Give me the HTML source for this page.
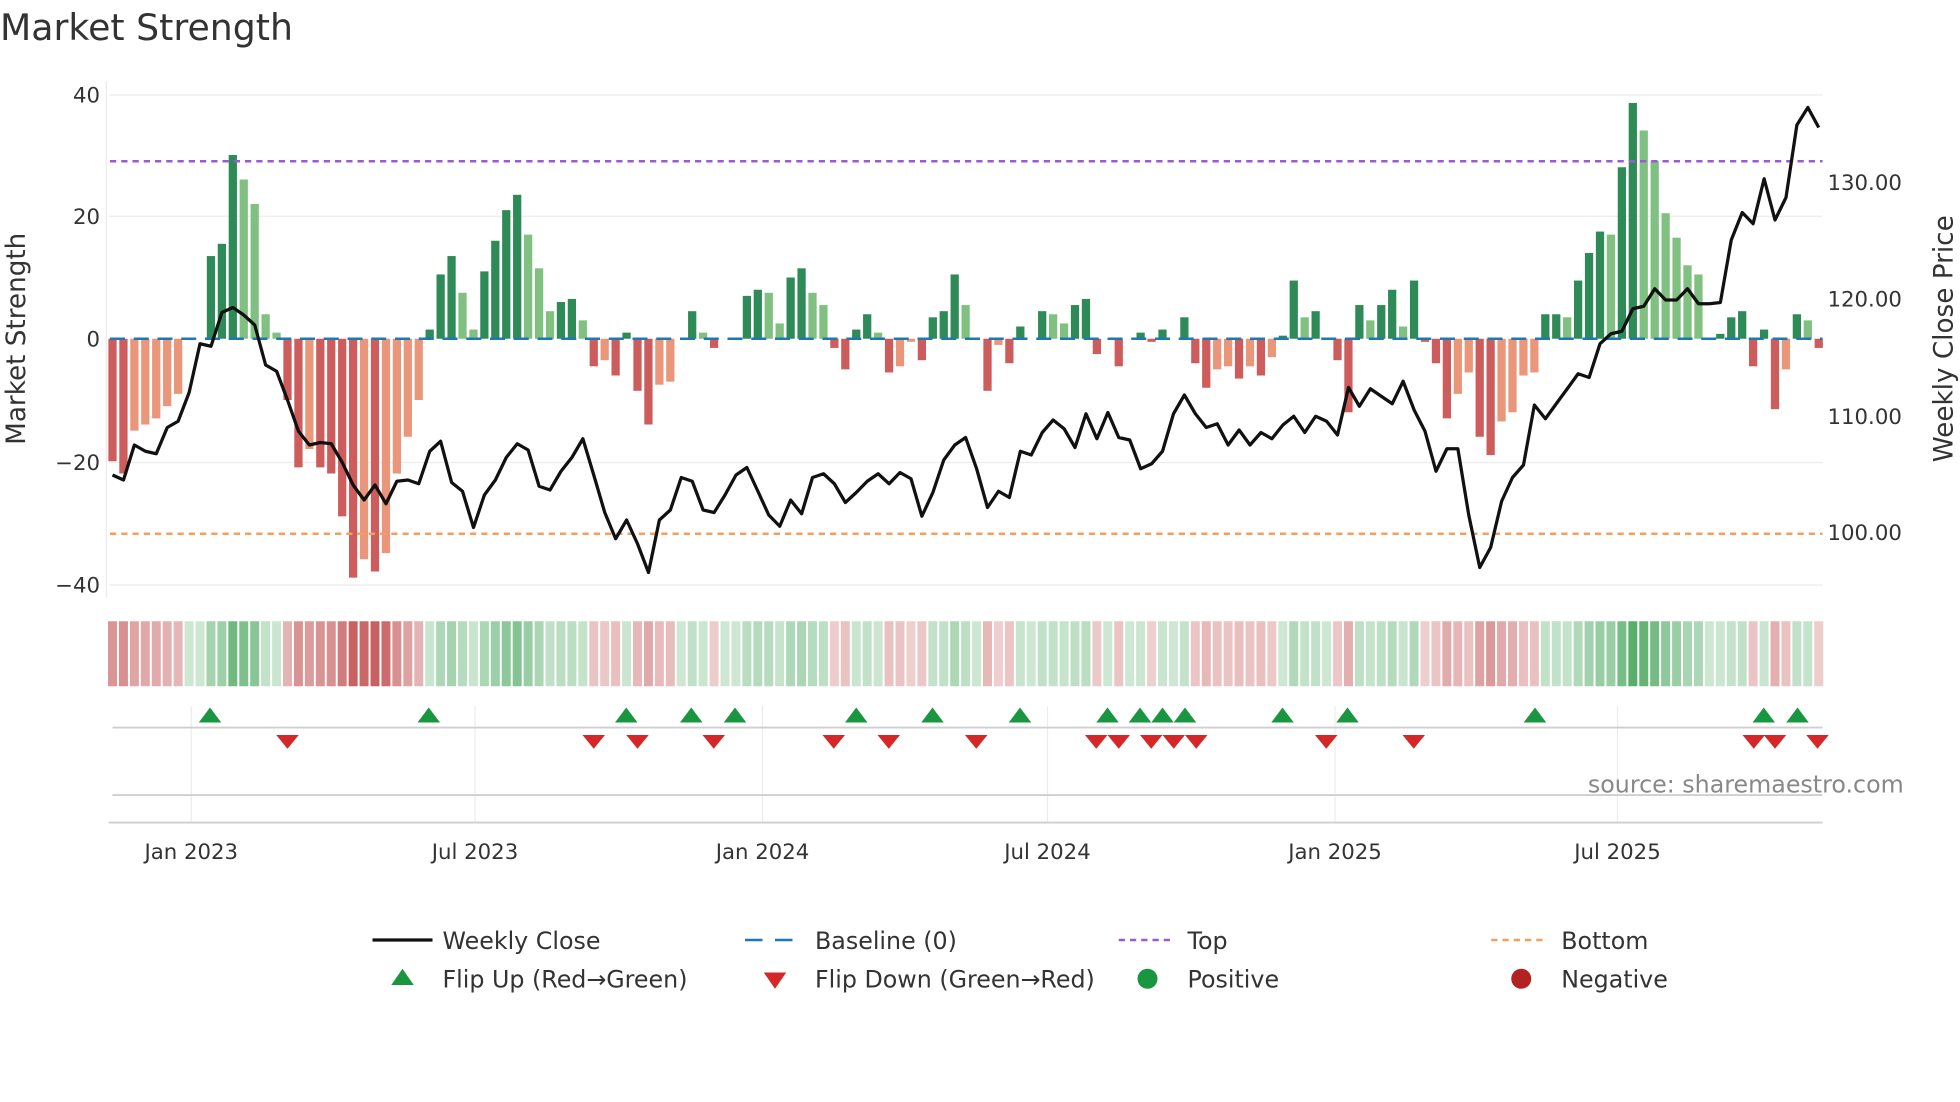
<!DOCTYPE html>
<html><head><meta charset="utf-8">
<style>
html,body{margin:0;padding:0;background:#fff;}
svg{display:block;font-family:"DejaVu Sans","Liberation Sans",sans-serif;}
</style></head>
<body>
<svg id="s" width="1960" height="1102" viewBox="0 0 1568 881.6" xmlns="http://www.w3.org/2000/svg">
<rect width="1568" height="881.6" fill="#fff"/>
<text x="0" y="32" font-size="29" fill="#333">Market Strength</text>
<g stroke="#ececec" stroke-width="1">
<line x1="87" x2="1458" y1="76" y2="76"/><line x1="87" x2="1458" y1="173" y2="173"/>
<line x1="87" x2="1458" y1="370" y2="370"/><line x1="87" x2="1458" y1="468" y2="468"/>
<line x1="85" x2="85" y1="65" y2="478"/>
<line x1="153" x2="153" y1="565" y2="658"/><line x1="380" x2="380" y1="565" y2="658"/>
<line x1="610" x2="610" y1="565" y2="658"/><line x1="838" x2="838" y1="565" y2="658"/>
<line x1="1068" x2="1068" y1="565" y2="658"/><line x1="1294" x2="1294" y1="565" y2="658"/>
</g>
<g id="bars"></g>
<line x1="88" x2="1458" y1="271" y2="271" stroke="#1f77b4" stroke-width="2" stroke-dasharray="12,7"/>
<line x1="88" x2="1458" y1="129" y2="129" stroke="#9b59d6" stroke-width="2" stroke-dasharray="5,4"/>
<line x1="88" x2="1458" y1="427" y2="427" stroke="#f2a060" stroke-width="2" stroke-dasharray="5,4"/>
<polyline id="price" fill="none" stroke="#111" stroke-width="2.6" stroke-linejoin="round"/>
<g id="heat"></g>
<line x1="90" x2="1458" y1="582" y2="582" stroke="#cfcfcf" stroke-width="1.5"/>
<line x1="90" x2="1458" y1="636" y2="636" stroke="#cfcfcf" stroke-width="1.5"/>
<line x1="87" x2="1458" y1="658" y2="658" stroke="#cfcfcf" stroke-width="1.5"/>
<g id="marks"></g>
<g font-size="17" fill="#333">
<text x="80" y="82" text-anchor="end">40</text>
<text x="80" y="179" text-anchor="end">20</text>
<text x="80" y="277" text-anchor="end">0</text>
<text x="80" y="376" text-anchor="end">−20</text>
<text x="80" y="474" text-anchor="end">−40</text>
<text x="1462" y="152">130.00</text>
<text x="1462" y="245">120.00</text>
<text x="1462" y="339">110.00</text>
<text x="1462" y="432">100.00</text>
<text x="153" y="687" text-anchor="middle">Jan 2023</text>
<text x="380" y="687" text-anchor="middle">Jul 2023</text>
<text x="610" y="687" text-anchor="middle">Jan 2024</text>
<text x="838" y="687" text-anchor="middle">Jul 2024</text>
<text x="1068" y="687" text-anchor="middle">Jan 2025</text>
<text x="1294" y="687" text-anchor="middle">Jul 2025</text>
</g>
<text transform="translate(20,271) rotate(-90)" font-size="21" fill="#333" text-anchor="middle">Market Strength</text>
<text transform="translate(1562,271) rotate(-90)" font-size="21" fill="#333" text-anchor="middle">Weekly Close Price</text>
<text x="1523" y="634" font-size="19" fill="#888" text-anchor="end">source: sharemaestro.com</text>
<g font-size="19" fill="#333">
<line x1="298" x2="346" y1="752" y2="752" stroke="#111" stroke-width="2.6"/>
<text x="354" y="759">Weekly Close</text>
<line x1="596" x2="642" y1="752" y2="752" stroke="#1f77b4" stroke-width="2" stroke-dasharray="14,10"/>
<text x="652" y="759">Baseline (0)</text>
<line x1="895" x2="940" y1="752" y2="752" stroke="#9b59d6" stroke-width="2" stroke-dasharray="5,4"/>
<text x="950" y="759">Top</text>
<line x1="1193" x2="1238" y1="752" y2="752" stroke="#f2a060" stroke-width="2" stroke-dasharray="5,4"/>
<text x="1249" y="759">Bottom</text>
<polygon points="313,788 331,788 322,775" fill="#1a9641"/>
<text x="354" y="790">Flip Up (Red→Green)</text>
<polygon points="611,778 629,778 620,791" fill="#d62728"/>
<text x="652" y="790">Flip Down (Green→Red)</text>
<circle cx="918" cy="783" r="8" fill="#1a9641"/>
<text x="950" y="790">Positive</text>
<circle cx="1217" cy="783" r="8" fill="#b22222"/>
<text x="1249" y="790">Negative</text>
</g>
</svg>
<script>
var v=[-20,-22,-15,-14,-13,-11,-9,0,0,13.5,15.5,30,26,22,4,1,-10,-21,-18,-21,-22,-29,-39,-36,-38,-35,-22,-16,-10,1.5,10.5,13.5,7.5,1.5,11,16,21,23.5,17,11.5,4.5,6,6.5,3,-4.5,-3.5,-6,1,-8.5,-14,-7.5,-7,0,4.5,1,-1.5,0,0,7,8,7.5,2.5,10,11.5,7.5,5.5,-1.5,-5,1.5,4,1,-5.5,-4.5,-0.5,-3.5,3.5,4.5,10.5,5.5,0,-8.5,-1,-4,2,0,4.5,4,2.5,5.5,6.5,-2.5,0,-4.5,0,1,-0.5,1.5,0,3.5,-4,-8,-5,-4.5,-6.5,-4.5,-6,-3,0.5,9.5,3.5,4.5,0,-3.5,-12,5.5,3,5.5,8,2,9.5,-0.5,-4,-13,-9,-5.5,-16,-19,-13.5,-12,-6,-5.5,4,4,3.5,9.5,14,17.5,17,28,38.5,34,29,20.5,16.5,12,10.5,0,0.8,3.5,4.5,-4.5,1.5,-11.5,-5,4,3,-1.5];
var py=[380,384,356,361,363,342,337,314,275,277,250,246,252,260,292,297,320,345,356,354,355,370,388,400,388,403,385,384,387,361,353,386,393,422,396,384,366,355,360,389,392,377,366,351,380,410,431,416,435,458,416,408,382,385,408,410,396,380,374,393,412,421,400,411,382,379,387,402,394,385,379,387,378,383,413,394,368,356,350,375,406,393,398,361,364,346,336,343,358,331,351,330,350,352,375,371,361,331,316,331,342,339,356,344,356,346,351,340,333,346,333,337,348,310,325,311,317,323,305,328,345,377,359,359,412,454,438,401,382,372,324,335,323,311,299,302,275,267,265,247,245,231,240,240,231,243,243,242,192,170,179,143,176,158,100,86,102];
var NS="http://www.w3.org/2000/svg";
function el(p,t,a){var e=document.createElementNS(NS,t);for(var k in a)e.setAttribute(k,a[k]);p.appendChild(e);return e;}
var B=document.getElementById('bars'),H=document.getElementById('heat'),M=document.getElementById('marks');
var step=(1455-90)/(v.length-1);
function mix(c,t){var w=[255,255,255];return 'rgb('+c.map(function(x,i){return Math.round(w[i]+(x-w[i])*t)}).join(',')+')';}
for(var i=0;i<v.length;i++){
 var x=90+i*step,val=v[i],pr=i?v[i-1]:0,col;
 if(val>0)col=(val>=pr)?'#2e8b57':'#80c080';else col=(val<=pr)?'#cd5c5c':'#e9967a';
 if(Math.abs(val)>0.01){var h=Math.abs(val)*4.9;el(B,'rect',{x:x-3.3,y:val>0?271-h:271,width:6.6,height:h,fill:col});}
 var t=0.25+0.6*Math.min(1,Math.abs(val)/38);
 var hc=val>=0?mix([58,160,80],t):mix([190,70,70],t);
 el(H,'rect',{x:x-3.6,y:497,width:7.2,height:52,fill:hc});
}
document.getElementById('price').setAttribute('points',py.map(function(y,i){return (90+i*(1455-90)/(py.length-1)).toFixed(1)+','+y}).join(' '));
[168,343,501,553,588,685,746,816,886,912,930,948,1026,1078,1228,1411,1438].forEach(function(x){el(M,'polygon',{points:(x-9)+',578 '+(x+9)+',578 '+x+',566',fill:'#1a9641'});});
[230,475,510,571,667,711,781,877,895,921,939,957,1061,1131,1403,1420,1454].forEach(function(x){el(M,'polygon',{points:(x-9)+',588 '+(x+9)+',588 '+x+',599',fill:'#d62728'});});
</script>
</body></html>
